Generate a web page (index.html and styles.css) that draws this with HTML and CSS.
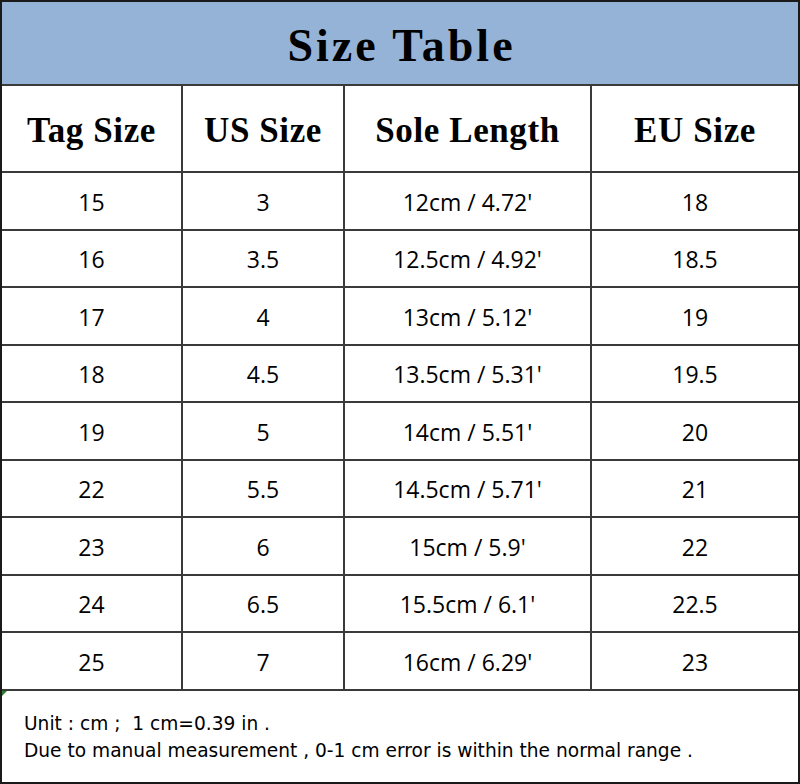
FILE: index.html
```html
<!DOCTYPE html>
<html>
<head>
<meta charset="utf-8">
<link rel="stylesheet" href="styles.css">
</head>
<body>
<div class="sheet">
  <div class="title"><span class="title-text">Size Table</span></div>
  <div class="th">Tag Size</div>
  <div class="th">US Size</div>
  <div class="th">Sole Length</div>
  <div class="th">EU Size</div>

  <div class="td">15</div><div class="td">3</div><div class="td">12cm / 4.72'</div><div class="td">18</div>
  <div class="td">16</div><div class="td">3.5</div><div class="td">12.5cm / 4.92'</div><div class="td">18.5</div>
  <div class="td">17</div><div class="td">4</div><div class="td">13cm / 5.12'</div><div class="td">19</div>
  <div class="td">18</div><div class="td">4.5</div><div class="td">13.5cm / 5.31'</div><div class="td">19.5</div>
  <div class="td">19</div><div class="td">5</div><div class="td">14cm / 5.51'</div><div class="td">20</div>
  <div class="td">22</div><div class="td">5.5</div><div class="td">14.5cm / 5.71'</div><div class="td">21</div>
  <div class="td">23</div><div class="td">6</div><div class="td">15cm / 5.9'</div><div class="td">22</div>
  <div class="td">24</div><div class="td">6.5</div><div class="td">15.5cm / 6.1'</div><div class="td">22.5</div>
  <div class="td">25</div><div class="td">7</div><div class="td">16cm / 6.29'</div><div class="td">23</div>

  <div class="note">
    <span class="marker"></span>
    <p>Unit : cm ;&nbsp; 1 cm=0.39 in .</p>
    <p>Due to manual measurement , 0-1 cm error is within the normal range .</p>
  </div>
</div>
</body>
</html>
```

FILE: styles.css
```css
html, body {
  margin: 0;
  padding: 0;
  background: #fff;
}

.sheet {
  box-sizing: border-box;
  width: 800px;
  height: 784px;
  border: 2px solid #1a1a1a;
  background: #3a3a3a;
  display: grid;
  grid-template-columns: 179px 160px 245px 206px;
  grid-template-rows: 82px 85px repeat(9, 55.5px) 1fr;
  gap: 2px;
}

.title {
  grid-column: 1 / -1;
  background: #95b3d7;
  display: flex;
  align-items: center;
  justify-content: center;
}

.title-text {
  font-family: "Liberation Serif", "Times New Roman", serif;
  font-weight: bold;
  font-size: 46px;
  letter-spacing: 3px;
  color: #000;
  padding-top: 4px;
  padding-left: 3px;
}

.th {
  background: #fff;
  display: flex;
  align-items: center;
  justify-content: center;
  font-family: "Liberation Serif", "Times New Roman", serif;
  font-weight: bold;
  font-size: 35px;
  letter-spacing: 0.6px;
  color: #000;
  padding-top: 4px;
}

.td {
  background: #fff;
  display: flex;
  align-items: center;
  justify-content: center;
  font-family: "Open Sans", "Liberation Sans", sans-serif;
  font-size: 23px;
  color: #000;
  padding-top: 2px;
}

.note {
  grid-column: 1 / -1;
  background: #fff;
  position: relative;
  display: flex;
  flex-direction: column;
  justify-content: center;
  padding-left: 22px;
  padding-top: 2px;
  font-family: "DejaVu Sans", "Liberation Sans", sans-serif;
  font-size: 18.6px;
  color: #000;
}

.note p {
  margin: 0;
  line-height: 27px;
}

.marker {
  position: absolute;
  left: 0;
  top: 0;
  width: 0;
  height: 0;
  border-top: 5px solid #2e7d32;
  border-right: 5px solid transparent;
}
```
